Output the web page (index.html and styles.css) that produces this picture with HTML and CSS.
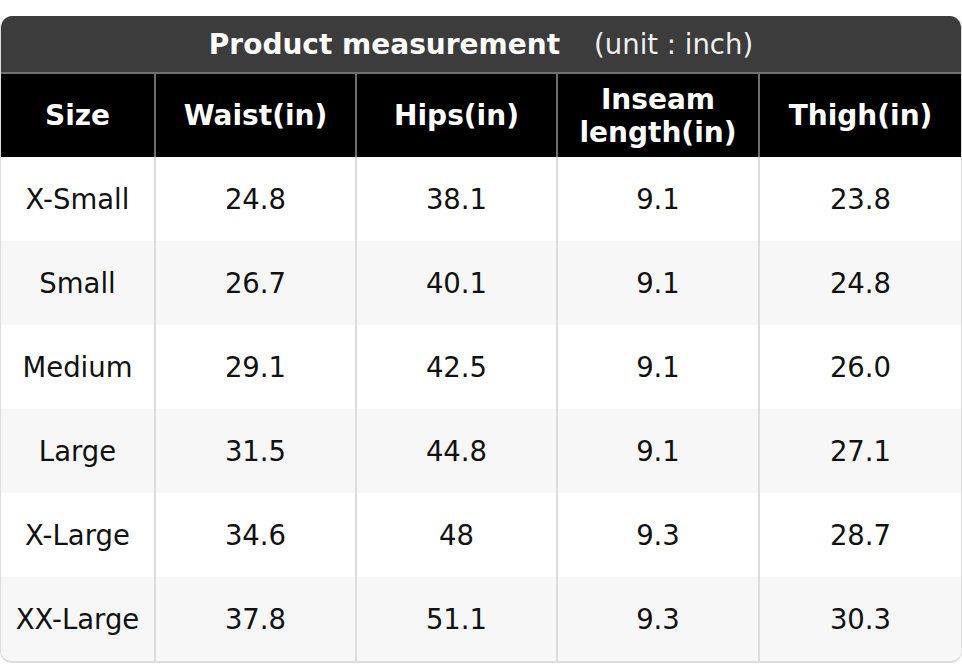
FILE: index.html
```html
<!DOCTYPE html>
<html>
<head>
<meta charset="utf-8">
<link rel="stylesheet" href="styles.css">
</head>
<body>
<div class="chart">
  <div class="title"><span class="title-main">Product measurement</span><span class="title-unit">(unit : inch)</span></div>
  <table class="sizes">
    <colgroup>
      <col class="c1"><col class="c2"><col class="c3"><col class="c4"><col class="c5">
    </colgroup>
    <thead>
      <tr><th>Size</th><th>Waist(in)</th><th>Hips(in)</th><th>Inseam<br>length(in)</th><th>Thigh(in)</th></tr>
    </thead>
    <tbody>
      <tr><td>X-Small</td><td>24.8</td><td>38.1</td><td>9.1</td><td>23.8</td></tr>
      <tr><td>Small</td><td>26.7</td><td>40.1</td><td>9.1</td><td>24.8</td></tr>
      <tr><td>Medium</td><td>29.1</td><td>42.5</td><td>9.1</td><td>26.0</td></tr>
      <tr><td>Large</td><td>31.5</td><td>44.8</td><td>9.1</td><td>27.1</td></tr>
      <tr><td>X-Large</td><td>34.6</td><td>48</td><td>9.3</td><td>28.7</td></tr>
      <tr><td>XX-Large</td><td>37.8</td><td>51.1</td><td>9.3</td><td>30.3</td></tr>
    </tbody>
  </table>
</div>
</body>
</html>
```

FILE: styles.css
```css
html, body {
  margin: 0;
  padding: 0;
  background: #fff;
}
body {
  padding-top: 16px;
  font-family: "DejaVu Sans", "Liberation Sans", sans-serif;
}
.chart {
  width: 962px;
  box-sizing: border-box;
  border: 1px solid #dcdcdc;
  border-top: none;
  border-bottom-width: 2px;
  border-radius: 12px;
  overflow: hidden;
}
.title {
  height: 56px;
  background: #3c3c3c;
  color: #fff;
  display: flex;
  align-items: center;
  justify-content: center;
  font-size: 28px;
  border-bottom: 2px solid #707070;
}
.title-main {
  font-weight: bold;
}
.title-unit {
  margin-left: 34px;
  font-size: 27.5px;
  color: #f0f0f0;
}
.sizes {
  width: 960px;
  table-layout: fixed;
  border-collapse: separate;
  border-spacing: 0;
}
.c1 { width: 153px; }
.c2 { width: 201px; }
.c3 { width: 201px; }
.c4 { width: 202px; }
.c5 { width: 203px; }
.sizes th,
.sizes td {
  padding: 0;
  text-align: center;
  vertical-align: middle;
  line-height: 33px;
}
.sizes th {
  height: 83px;
  background: #000;
  color: #fff;
  font-size: 28px;
  font-weight: bold;
  border-left: 2px solid #6e6e6e;
}
.sizes td {
  height: 84px;
  color: #111;
  font-size: 27.5px;
  border-left: 2px solid #dcdcdc;
}
.sizes th:first-child,
.sizes td:first-child {
  border-left: none;
}
.sizes tbody tr:nth-child(even) td {
  background: #f7f7f7;
}
```
